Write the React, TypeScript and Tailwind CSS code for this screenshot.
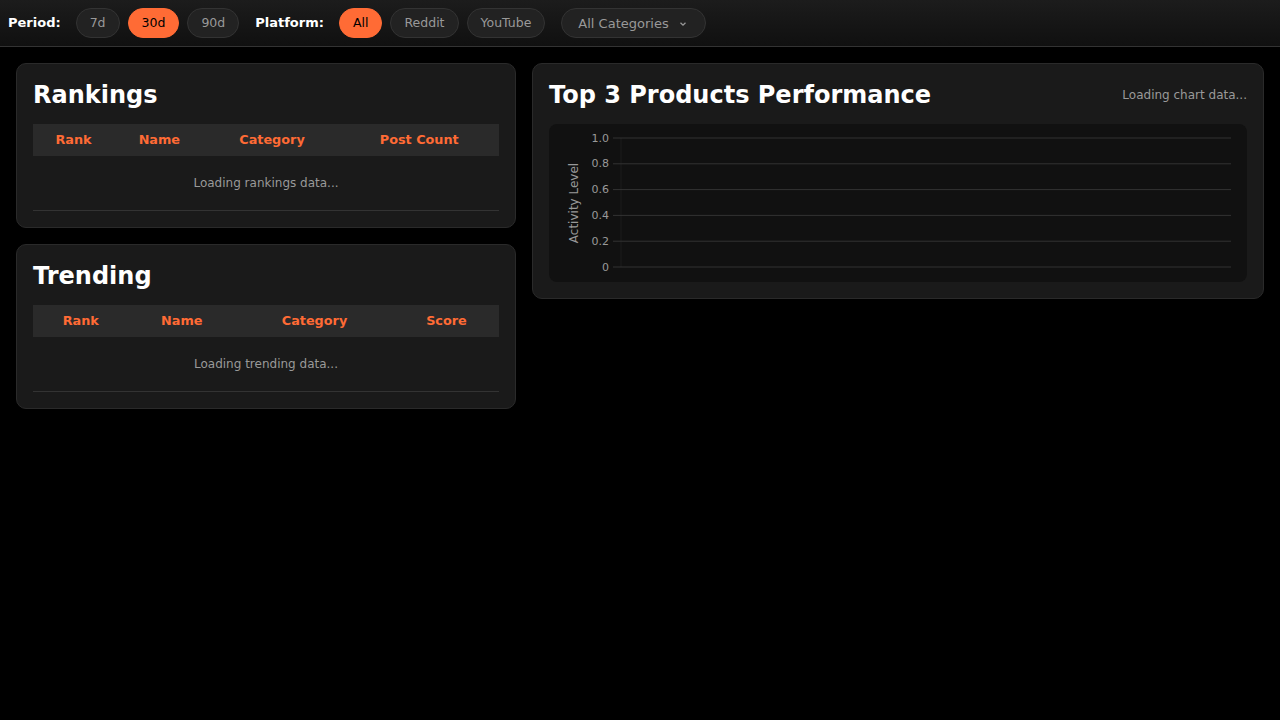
import React from "react";

const periods = ["7d", "30d", "90d"];
const platforms = ["All", "Reddit", "YouTube"];

const gridLines = [
  { label: "1.0", y: 14 },
  { label: "0.8", y: 39.8 },
  { label: "0.6", y: 65.6 },
  { label: "0.4", y: 91.4 },
  { label: "0.2", y: 117.2 },
  { label: "0", y: 143 },
];

function Pill({ label, active }: { label: string; active?: boolean }) {
  return (
    <button
      type="button"
      className={`h-[30px] rounded-full border px-[13px] pt-px text-[12.5px] leading-none ${
        active
          ? "bg-[#ff6b35] border-[#ff6b35] text-black"
          : "bg-[#222] border-[#333] text-[#999]"
      }`}
    >
      {label}
    </button>
  );
}

function DataTable({ columns, loading }: { columns: string[]; loading: string }) {
  return (
    <table className="w-full border-collapse">
      <thead>
        <tr>
          {columns.map((c) => (
            <th
              key={c}
              className="bg-[#2a2a2a] px-1 py-2 text-center text-[12.8px] leading-4 font-bold text-[#ff6b35]"
            >
              {c}
            </th>
          ))}
        </tr>
      </thead>
      <tbody>
        <tr>
          <td
            colSpan={columns.length}
            className="border-b border-[#333] py-5 text-center text-xs leading-[14px] text-[#999]"
          >
            {loading}
          </td>
        </tr>
      </tbody>
    </table>
  );
}

function Card({ title, children }: { title: string; children: React.ReactNode }) {
  return (
    <section className="rounded-[10px] border border-[#2a2a2a] bg-[#1a1a1a] p-4">
      <h2 className="mb-[14px] text-2xl leading-[30px] font-bold text-white">{title}</h2>
      {children}
    </section>
  );
}

export default function App() {
  return (
    <div
      className="min-h-screen bg-black text-white"
      style={{ fontFamily: '"DejaVu Sans", sans-serif' }}
    >
      {/* Filter bar */}
      <header className="flex h-[47px] items-center gap-4 border-b border-[#333] bg-linear-to-b from-[#1c1c1c] to-[#101010] px-2">
        <div className="flex items-center gap-[15px]">
          <span className="text-[13px] font-bold">Period:</span>
          <div className="flex gap-2">
            {periods.map((p) => (
              <Pill key={p} label={p} active={p === "30d"} />
            ))}
          </div>
        </div>
        <div className="flex items-center gap-[15px]">
          <span className="text-[13px] font-bold">Platform:</span>
          <div className="flex gap-2">
            {platforms.map((p) => (
              <Pill key={p} label={p} active={p === "All"} />
            ))}
          </div>
        </div>
        <button
          type="button"
          className="flex h-[30px] w-[145px] items-center rounded-full border border-[#333] bg-[#222] pl-4 pt-px text-[13px] leading-none text-[#999]"
        >
          <span>All Categories</span>
          <svg width="8" height="6" viewBox="0 0 8 6" className="ml-[10px]" aria-hidden="true">
            <path d="M1.5 1.8 L4 4.2 L6.5 1.8" fill="none" stroke="#999" strokeWidth="1.3" />
          </svg>
        </button>
      </header>

      <main className="grid grid-cols-[500px_1fr] items-start gap-4 p-4">
        <div className="flex flex-col gap-4">
          <Card title="Rankings">
            <DataTable
              columns={["Rank", "Name", "Category", "Post Count"]}
              loading="Loading rankings data..."
            />
          </Card>
          <Card title="Trending">
            <DataTable
              columns={["Rank", "Name", "Category", "Score"]}
              loading="Loading trending data..."
            />
          </Card>
        </div>

        <section className="rounded-[10px] border border-[#2a2a2a] bg-[#1a1a1a] p-4">
          <div className="mb-[14px] flex h-[30px] items-center justify-between">
            <h2 className="text-2xl leading-[30px] font-bold text-white">Top 3 Products Performance</h2>
            <span className="text-xs text-[#999]">Loading chart data...</span>
          </div>
          <div className="h-[158px] rounded-lg bg-[#111]">
            <svg width="100%" height="158" className="block">
              <line x1="72" y1="14" x2="72" y2="143" stroke="#1c1c1c" />
              {gridLines.map((g) => (
                <g key={g.label}>
                  <line x1="72" y1={g.y} x2="682" y2={g.y} stroke="#333" />
                  <line x1="64" y1={g.y} x2="72" y2={g.y} stroke="#333" />
                  <text
                    x="60"
                    y={g.y + 3.5}
                    textAnchor="end"
                    fontSize="11"
                    fill="#999"
                    fontFamily="DejaVu Sans, sans-serif"
                  >
                    {g.label}
                  </text>
                </g>
              ))}
              <text
                transform="translate(29,79) rotate(-90)"
                textAnchor="middle"
                fontSize="12"
                fill="#999"
                fontFamily="DejaVu Sans, sans-serif"
              >
                Activity Level
              </text>
            </svg>
          </div>
        </section>
      </main>
    </div>
  );
}
